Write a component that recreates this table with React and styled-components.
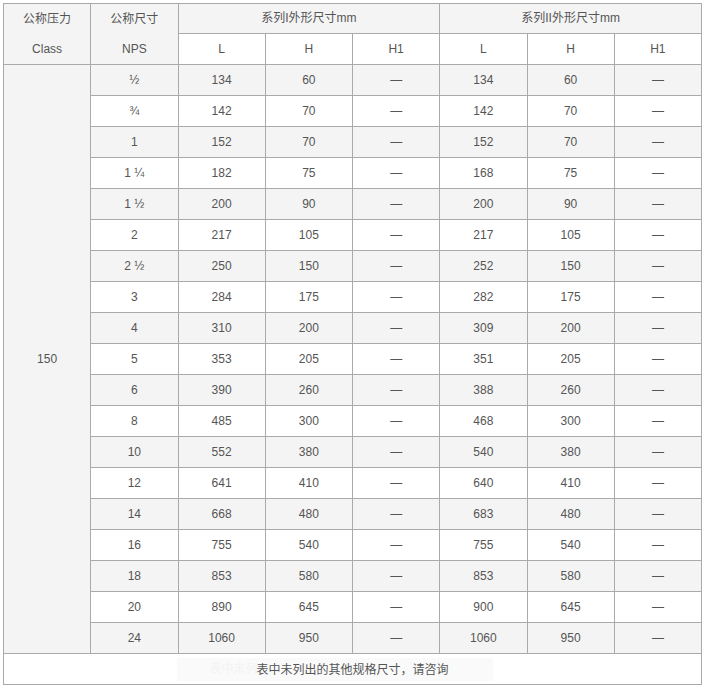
import React from "react";
import styled, { createGlobalStyle } from "styled-components";

const Global = createGlobalStyle`
  html, body { margin: 0; padding: 0; background: #fff; }
  body { font-family: "Liberation Sans", "Noto Sans CJK SC", sans-serif; }
`;

const Wrap = styled.div`
  padding: 3px;
`;

const Table = styled.table`
  width: 699px;
  border-collapse: collapse;
  table-layout: fixed;
  border: 1px solid #aaa;
  font-size: 12px;
  color: #555;
`;

const Row = styled.tr`
  background: ${(p) => (p.$shade ? "#f4f4f4" : "#fff")};
`;

const Cell = styled.td`
  border: 1px solid #aaa;
  padding: 0;
  height: ${(p) => p.$h || 30}px;
  line-height: ${(p) => p.$h || 30}px;
  text-align: center;
  vertical-align: middle;
  background: ${(p) => (p.$shade ? "#f4f4f4" : "transparent")};
  white-space: nowrap;
`;

const StackCell = styled(Cell)`
  height: auto;
  line-height: 30px;
`;

const Line = styled.div`
  height: ${(p) => p.$h || 30}px;
  line-height: ${(p) => p.$h || 30}px;
`;

const FootCell = styled(Cell)`
  background: #fff;
`;

const Note = styled.span`
  position: relative;
  display: inline-block;
  line-height: 18px;
  vertical-align: middle;
  z-index: 0;
  &::before {
    content: "表中未列";
    position: absolute;
    left: -79px;
    right: -44px;
    top: -3px;
    bottom: -2px;
    padding-left: 32px;
    text-align: left;
    line-height: 23px;
    background: #fafafa;
    color: #f3f3f3;
    z-index: -1;
  }
`;

const rows = [
  ["½", 134, 60, 134, 60],
  ["¾", 142, 70, 142, 70],
  ["1", 152, 70, 152, 70],
  ["1 ¼", 182, 75, 168, 75],
  ["1 ½", 200, 90, 200, 90],
  ["2", 217, 105, 217, 105],
  ["2 ½", 250, 150, 252, 150],
  ["3", 284, 175, 282, 175],
  ["4", 310, 200, 309, 200],
  ["5", 353, 205, 351, 205],
  ["6", 390, 260, 388, 260],
  ["8", 485, 300, 468, 300],
  ["10", 552, 380, 540, 380],
  ["12", 641, 410, 640, 410],
  ["14", 668, 480, 683, 480],
  ["16", 755, 540, 755, 540],
  ["18", 853, 580, 853, 580],
  ["20", 890, 645, 900, 645],
  ["24", 1060, 950, 1060, 950],
];

export default function App() {
  return (
    <>
      <Global />
      <Wrap>
        <Table>
          <colgroup>
            {Array.from({ length: 8 }).map((_, i) => (
              <col key={i} style={{ width: "12.5%" }} />
            ))}
          </colgroup>
          <tbody>
            <Row $shade>
              <StackCell rowSpan={2}>
                <Line $h={29}>公称压力</Line>
                <Line>Class</Line>
              </StackCell>
              <StackCell rowSpan={2}>
                <Line $h={29}>公称尺寸</Line>
                <Line>NPS</Line>
              </StackCell>
              <Cell colSpan={3} $h={29}>系列I外形尺寸mm</Cell>
              <Cell colSpan={3} $h={29}>系列II外形尺寸mm</Cell>
            </Row>
            <Row>
              <Cell>L</Cell>
              <Cell>H</Cell>
              <Cell>H1</Cell>
              <Cell>L</Cell>
              <Cell>H</Cell>
              <Cell>H1</Cell>
            </Row>
            {rows.map((r, i) => (
              <Row key={i} $shade={i % 2 === 0}>
                {i === 0 && (
                  <Cell rowSpan={rows.length} $shade>
                    150
                  </Cell>
                )}
                <Cell>{r[0]}</Cell>
                <Cell>{r[1]}</Cell>
                <Cell>{r[2]}</Cell>
                <Cell>—</Cell>
                <Cell>{r[3]}</Cell>
                <Cell>{r[4]}</Cell>
                <Cell>—</Cell>
              </Row>
            ))}
            <Row>
              <FootCell colSpan={8}>
                <Note>表中未列出的其他规格尺寸，请咨询</Note>
              </FootCell>
            </Row>
          </tbody>
        </Table>
      </Wrap>
    </>
  );
}
